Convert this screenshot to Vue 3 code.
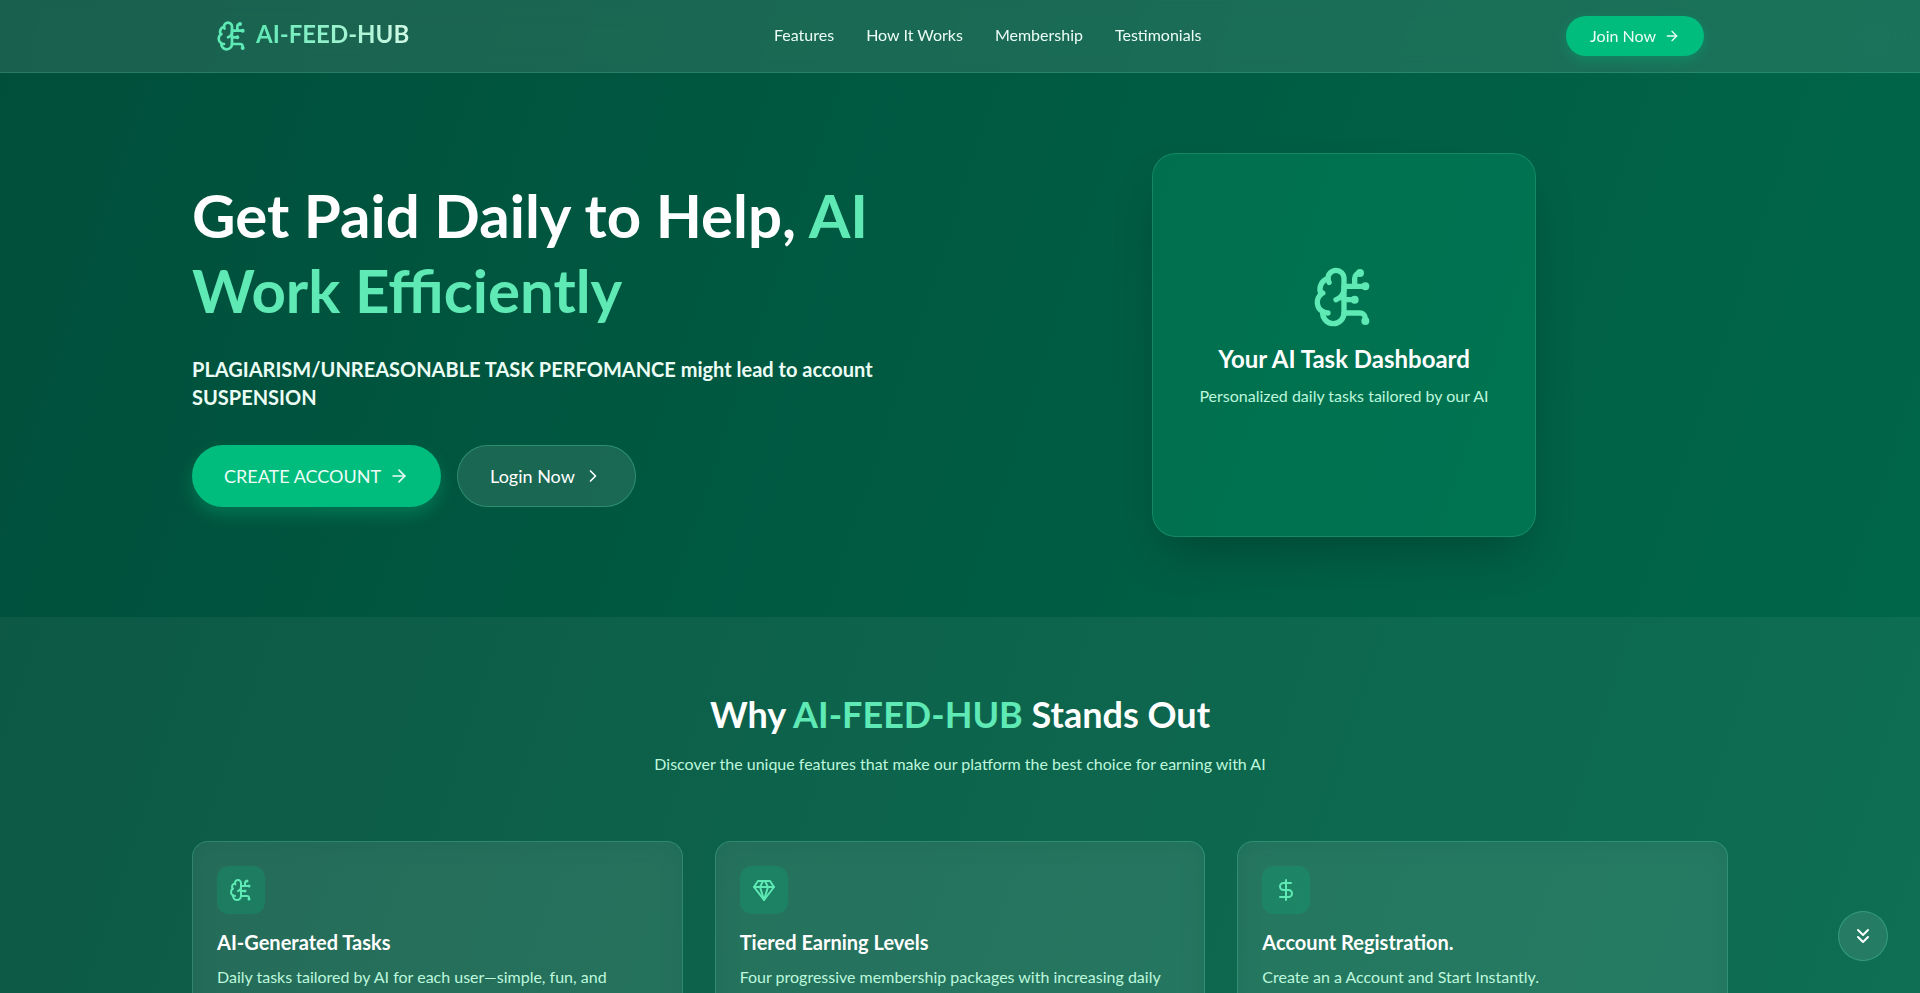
<template>
    <div class="page">
        <header class="header">
            <div class="container headerInner">
                <a href="#" class="logo">
                    <svg class="icon" width="32" height="32" viewBox="0 0 24 24" aria-hidden="true">
                        <path v-for="d in icons.brain" :key="d" :d="d" />
                    </svg>
                    <span>AI-FEED-HUB</span>
                </a>
                <nav class="nav">
                    <a v-for="link in links" :key="link.href" :href="link.href">{{link.label}}</a>
                </nav>
                <button type="button" class="joinBtn">
                    Join Now
                    <svg class="icon" width="16" height="16" viewBox="0 0 24 24" aria-hidden="true">
                        <path v-for="d in icons.arrow" :key="d" :d="d" />
                    </svg>
                </button>
            </div>
        </header>

        <section class="container hero">
            <div class="heroText">
                <h1>Get Paid Daily to Help, <span>AI Work Efficiently</span></h1>
                <p>PLAGIARISM/UNREASONABLE TASK PERFOMANCE might lead to account SUSPENSION</p>
                <div class="actions">
                    <button type="button" class="createBtn">
                        CREATE ACCOUNT
                        <svg class="icon" width="20" height="20" viewBox="0 0 24 24" aria-hidden="true">
                            <path v-for="d in icons.arrow" :key="d" :d="d" />
                        </svg>
                    </button>
                    <button type="button" class="loginBtn">
                        Login Now
                        <svg class="icon" width="20" height="20" viewBox="0 0 24 24" aria-hidden="true">
                            <path v-for="d in icons.chevron" :key="d" :d="d" />
                        </svg>
                    </button>
                </div>
            </div>
            <div class="heroSide">
                <div class="dashboard">
                    <svg class="icon" width="64" height="64" viewBox="0 0 24 24" aria-hidden="true">
                        <path v-for="d in icons.brain" :key="d" :d="d" />
                    </svg>
                    <h3>Your AI Task Dashboard</h3>
                    <p>Personalized daily tasks tailored by our AI</p>
                </div>
            </div>
        </section>

        <section id="features" class="features">
            <div class="container">
                <div class="heading">
                    <h2>Why <span>AI-FEED-HUB</span> Stands Out</h2>
                    <p>Discover the unique features that make our platform the best choice for earning with AI</p>
                </div>
                <div class="cards">
                    <article v-for="card in cards" :key="card.title" class="card">
                        <div class="tile">
                            <svg class="icon" width="24" height="24" viewBox="0 0 24 24" aria-hidden="true">
                                <path v-for="d in icons[card.icon]" :key="d" :d="d" />
                            </svg>
                        </div>
                        <h3>{{card.title}}</h3>
                        <p>{{card.text}}</p>
                    </article>
                </div>
            </div>
        </section>

        <button type="button" class="scrollBtn" aria-label="Scroll down" @click="scrollDown">
            <svg class="icon" width="24" height="24" viewBox="0 0 24 24" aria-hidden="true">
                <path v-for="d in icons.chevrons" :key="d" :d="d" />
            </svg>
        </button>
    </div>
</template>
<script setup>
    const links = [
        { label : "Features", href : "#features" },
        { label : "How It Works", href : "#how-it-works" },
        { label : "Membership", href : "#membership" },
        { label : "Testimonials", href : "#testimonials" }
    ]
    const cards = [
        { icon : "brain", title : "AI-Generated Tasks", text : "Daily tasks tailored by AI for each user—simple, fun, and rewarding." },
        { icon : "gem", title : "Tiered Earning Levels", text : "Four progressive membership packages with increasing daily rewards." },
        { icon : "dollar", title : "Account Registration.", text : "Create an a Account and Start Instantly." }
    ]
    // 24 x 24 stroke icons
    const icons = {
        brain : [
            "M12 5a3 3 0 1 0-5.997.125 4 4 0 0 0-2.526 5.77 4 4 0 0 0 .556 6.588A4 4 0 1 0 12 18Z",
            "M9 13a4.5 4.5 0 0 0 3-4",
            "M6.003 5.125A3 3 0 0 0 6.401 6.5",
            "M3.477 10.896a4 4 0 0 1 .585-.396",
            "M6 18a4 4 0 0 1-1.967-.516",
            "M12 13h4",
            "M12 18h6a2 2 0 0 1 2 2v1",
            "M12 8h8",
            "M16 8V5a2 2 0 0 1 2-2",
            "M15.5 13a.5.5 0 1 0 1 0 .5.5 0 1 0-1 0",
            "M17.5 3a.5.5 0 1 0 1 0 .5.5 0 1 0-1 0",
            "M19.5 21a.5.5 0 1 0 1 0 .5.5 0 1 0-1 0",
            "M19.5 8a.5.5 0 1 0 1 0 .5.5 0 1 0-1 0"
        ],
        gem : ["M6 3h12l4 6-10 13L2 9Z", "M11 3 8 9l4 13 4-13-3-6", "M2 9h20"],
        dollar : ["M12 2v20", "M17 5H9.5a3.5 3.5 0 0 0 0 7h5a3.5 3.5 0 0 1 0 7H6"],
        arrow : ["M5 12h14", "m12 5 7 7-7 7"],
        chevron : ["m9 18 6-6-6-6"],
        chevrons : ["m7 6 5 5 5-5", "m7 13 5 5 5-5"]
    }
    const scrollDown = ()=>{
        window.scrollBy({ top : window.innerHeight, behavior : "smooth" });
    }
</script>
<style>
    body{
        margin:0;
        background:#007a55;
    }
</style>
<style scoped>
    .page{
        min-height:100vh;
        font-family:Lato, "Open Sans", sans-serif;
        font-size:16px;
        line-height:24px;
        color:#fff;
        background:linear-gradient(to bottom right in oklab, #004f3b, #007a55) no-repeat;
        background-size:100% 600vh;
    }
    h1, h2, h3, p{
        margin:0;
    }
    button{
        display:flex;
        align-items:center;
        justify-content:center;
        gap:8px;
        border:0;
        border-radius:999px;
        font:inherit;
        color:inherit;
        cursor:pointer;
    }
    .icon{
        flex:none;
        display:block;
        fill:none;
        stroke:currentColor;
        stroke-width:2;
        stroke-linecap:round;
        stroke-linejoin:round;
    }
    .container{
        box-sizing:border-box;
        width:100%;
        max-width:1536px;
        margin:0 auto;
    }
    .header{
        position:sticky;
        top:0;
        z-index:10;
        background:rgba(255, 255, 255, 0.1);
        border-bottom:1px solid rgba(94, 233, 181, 0.2);
        backdrop-filter:blur(12px);
    }
    .headerInner{
        display:flex;
        align-items:center;
        justify-content:space-between;
        padding:16px 24px;
    }
    .logo{
        display:flex;
        align-items:center;
        gap:8px;
        font-size:24px;
        font-weight:700;
        line-height:28px;
        color:#5ee9b5;
        text-decoration:none;
    }
    .logo span{
        padding-bottom:4px;
        background:linear-gradient(to right, #5ee9b5, #d0fae5);
        background-clip:text;
        color:transparent;
    }
    .nav{
        display:flex;
        gap:32px;
        padding-bottom:2px;
    }
    .nav a{
        color:#ecfdf5;
        text-decoration:none;
    }
    .joinBtn{
        padding:8px 24px;
        color:#ecfdf5;
        background:#00bc7d;
        box-shadow:0 4px 12px rgba(0, 188, 125, 0.3);
    }
    .hero{
        display:flex;
        align-items:center;
        padding:80px 0;
    }
    .heroText, .heroSide{
        flex:1;
    }
    .heroText{
        padding-bottom:5px;
    }
    .heroText h1{
        margin-bottom:27px;
        font-size:60px;
        font-weight:700;
        line-height:75px;
    }
    h1 span, h2 span{
        color:#5ee9b5;
    }
    .heroText p{
        margin-bottom:34px;
        font-size:20px;
        font-weight:700;
        line-height:28px;
        color:#ecfdf5;
    }
    .actions{
        display:flex;
        gap:16px;
    }
    .actions button{
        padding:16px 32px;
        font-size:18px;
        line-height:28px;
    }
    .actions .createBtn{
        color:#ecfdf5;
        background:#00bc7d;
        box-shadow:0 8px 16px rgba(0, 188, 125, 0.3);
    }
    .actions .loginBtn{
        background:rgba(255, 255, 255, 0.1);
        border:1px solid rgba(94, 233, 181, 0.3);
    }
    .heroSide{
        display:flex;
        justify-content:center;
    }
    .dashboard{
        box-sizing:border-box;
        display:flex;
        flex-direction:column;
        align-items:center;
        justify-content:center;
        width:384px;
        height:384px;
        border:1px solid rgba(94, 233, 181, 0.2);
        border-radius:24px;
        background:rgba(0, 188, 125, 0.2);
        box-shadow:0 24px 48px -12px rgba(0, 0, 0, 0.25);
    }
    .dashboard .icon{
        margin-bottom:16px;
        color:#5ee9b5;
    }
    .dashboard h3{
        margin-bottom:11px;
        font-size:24px;
        font-weight:700;
        line-height:28px;
    }
    .dashboard p{
        margin-bottom:17px;
        color:#bdf7dc;
    }
    .features{
        padding:80px 0;
        background:rgba(255, 255, 255, 0.05);
    }
    .heading{
        margin-bottom:65px;
        text-align:center;
    }
    .heading h2{
        margin-bottom:21px;
        font-size:36px;
        font-weight:700;
        line-height:34px;
    }
    .heading p{
        color:#bdf7dc;
    }
    .cards{
        display:grid;
        grid-template-columns:repeat(3, 1fr);
        gap:32px;
    }
    .card{
        padding:24px;
        border:1px solid rgba(94, 233, 181, 0.2);
        border-radius:16px;
        background:rgba(255, 255, 255, 0.1);
        box-shadow:inset 0 0 24px rgba(0, 79, 59, 0.15);
    }
    .tile{
        display:flex;
        align-items:center;
        justify-content:center;
        width:48px;
        height:48px;
        margin-bottom:16px;
        border-radius:12px;
        background:rgba(0, 188, 125, 0.2);
        color:#5ee9b5;
    }
    .card h3{
        margin-bottom:11px;
        font-size:20px;
        font-weight:700;
        line-height:24px;
    }
    .card p{
        color:#bdf7dc;
    }
    .scrollBtn{
        position:fixed;
        right:32px;
        bottom:32px;
        padding:12px;
        border:1px solid rgba(94, 233, 181, 0.3);
        background:rgba(255, 255, 255, 0.1);
    }
</style>
